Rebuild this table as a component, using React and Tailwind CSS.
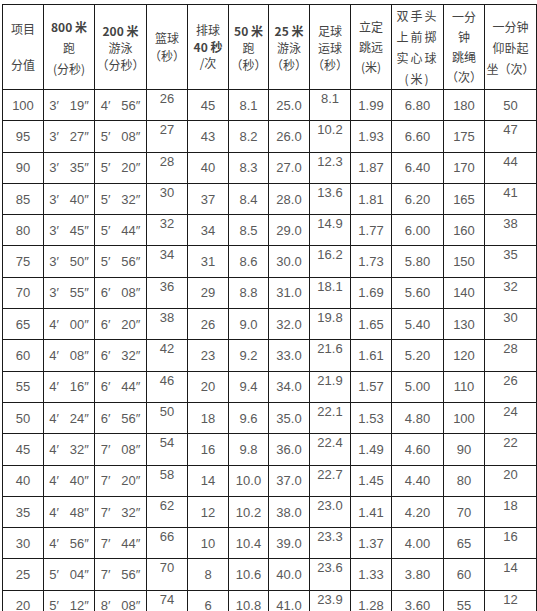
const widths = [41, 51, 52, 41, 41, 40, 41, 41, 41, 52, 41, 52];

const headers = [
  { lines: ["项目", "\u00a0", "分值"], lh: "leading-[18px]" },
  { lines: [<b key="a">800 米</b>, "跑", "(分秒)"], lh: "leading-[21px]" },
  { lines: [<b key="a">200 米</b>, "游泳", "（分秒）"], lh: "leading-[17px]" },
  { lines: ["篮球", "（秒）"], lh: "leading-[18px]" },
  { lines: ["排球", <b key="a">40 秒</b>, "/次"], lh: "leading-[16.5px]" },
  { lines: [<b key="a">50 米</b>, "跑", "（秒）"], lh: "leading-[17px]" },
  { lines: [<b key="a">25 米</b>, "游泳", "（秒）"], lh: "leading-[17px]" },
  { lines: ["足球", "运球", "（秒）"], lh: "leading-[17px]" },
  { lines: ["立定", "跳远", "(米)"], lh: "leading-[20px]" },
  { lines: ["双手头", "上前掷", "实心球", "(米)"], lh: "leading-[21px] tracking-[2px] text-[11px]" },
  { lines: ["一分", "钟", "跳绳", "（次）"], lh: "leading-[20px]" },
  { lines: ["一分钟", "仰卧起", "坐（次）"], lh: "leading-[21px]" },
];

const rows = [
  ["100", "3′ 19″", "4′ 56″", "26", "45", "8.1", "25.0", "8.1", "1.99", "6.80", "180", "50"],
  ["95", "3′ 27″", "5′ 08″", "27", "43", "8.2", "26.0", "10.2", "1.93", "6.60", "175", "47"],
  ["90", "3′ 35″", "5′ 20″", "28", "40", "8.3", "27.0", "12.3", "1.87", "6.40", "170", "44"],
  ["85", "3′ 40″", "5′ 32″", "30", "37", "8.4", "28.0", "13.6", "1.81", "6.20", "165", "41"],
  ["80", "3′ 45″", "5′ 44″", "32", "34", "8.5", "29.0", "14.9", "1.77", "6.00", "160", "38"],
  ["75", "3′ 50″", "5′ 56″", "34", "31", "8.6", "30.0", "16.2", "1.73", "5.80", "150", "35"],
  ["70", "3′ 55″", "6′ 08″", "36", "29", "8.8", "31.0", "18.1", "1.69", "5.60", "140", "32"],
  ["65", "4′ 00″", "6′ 20″", "38", "26", "9.0", "32.0", "19.8", "1.65", "5.40", "130", "30"],
  ["60", "4′ 08″", "6′ 32″", "42", "23", "9.2", "33.0", "21.6", "1.61", "5.20", "120", "28"],
  ["55", "4′ 16″", "6′ 44″", "46", "20", "9.4", "34.0", "21.9", "1.57", "5.00", "110", "26"],
  ["50", "4′ 24″", "6′ 56″", "50", "18", "9.6", "35.0", "22.1", "1.53", "4.80", "100", "24"],
  ["45", "4′ 32″", "7′ 08″", "54", "16", "9.8", "36.0", "22.4", "1.49", "4.60", "90", "22"],
  ["40", "4′ 40″", "7′ 20″", "58", "14", "10.0", "37.0", "22.7", "1.45", "4.40", "80", "20"],
  ["35", "4′ 48″", "7′ 32″", "62", "12", "10.2", "38.0", "23.0", "1.41", "4.20", "70", "18"],
  ["30", "4′ 56″", "7′ 44″", "66", "10", "10.4", "39.0", "23.3", "1.37", "4.00", "65", "16"],
  ["25", "5′ 04″", "7′ 56″", "70", "8", "10.6", "40.0", "23.6", "1.33", "3.80", "60", "14"],
  ["20", "5′ 12″", "8′ 08″", "74", "6", "10.8", "41.0", "23.9", "1.28", "3.60", "55", "12"],
];

// some columns in the source sit higher in their cells
function raised(r, c) {
  if (c === 3 || c === 7) return true;
  if (c === 11 && r > 0) return true;
  return false;
}

export default function App() {
  return (
    <div className="w-[537px] h-[611px] overflow-hidden bg-white pt-[4px] pl-[2px]">
      <table className="table-fixed border-collapse w-[534px] text-center">
        <colgroup>
          {widths.map((w, i) => (
            <col key={i} style={{ width: w }} />
          ))}
        </colgroup>
        <thead>
          <tr className="h-[82px]">
            {headers.map((h, i) => (
              <th
                key={i}
                className={`border border-[#1a1a1a] p-0 align-middle font-normal text-[12px] text-[#444] font-['Noto_Sans_CJK_SC',sans-serif] ${h.lh}`}
              >
                {h.lines.map((l, j) => (
                  <div key={j} className="whitespace-nowrap">
                    {l}
                  </div>
                ))}
              </th>
            ))}
          </tr>
        </thead>
        <tbody>
          {rows.map((row, r) => (
            <tr key={r} className="h-[31.3px]">
              {row.map((v, c) => (
                <td
                  key={c}
                  className={`border border-[#1a1a1a] p-0 text-[13px] leading-[15px] text-[#5a5a5a] font-['Liberation_Sans',sans-serif] whitespace-pre ${
                    raised(r, c) ? "align-top pt-[1px]" : "align-middle"
                  }`}
                >
                  {c === 1 || c === 2 ? v.replace(" ", "   ") : v}
                </td>
              ))}
            </tr>
          ))}
        </tbody>
      </table>
    </div>
  );
}
